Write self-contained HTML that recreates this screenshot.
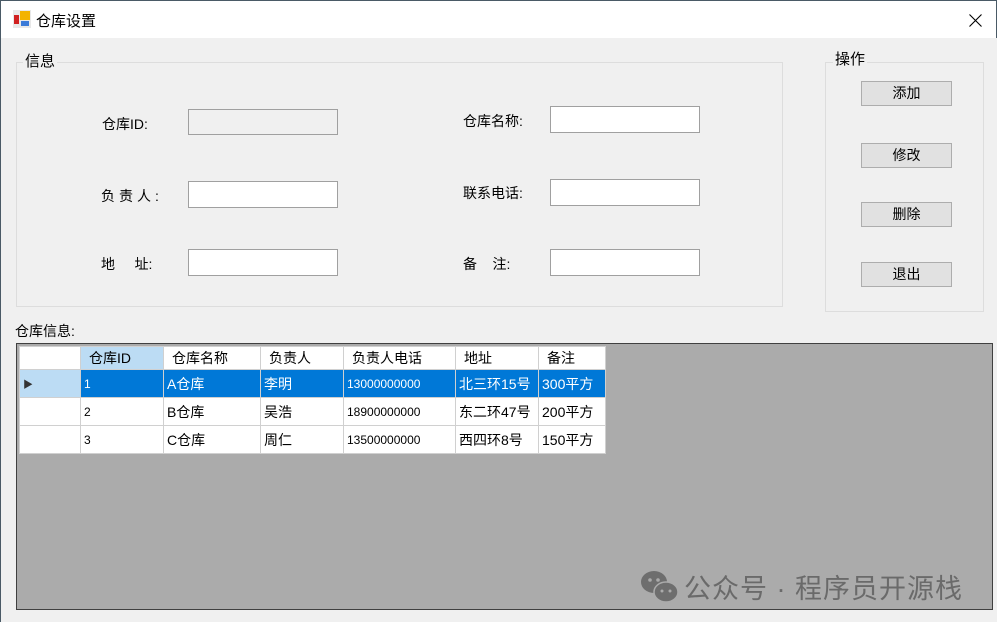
<!DOCTYPE html>
<html><head><meta charset="utf-8"><style>
*{margin:0;padding:0;box-sizing:border-box}
body{width:997px;height:622px;background:#f0f0f0;position:relative;overflow:hidden;font-family:"Liberation Sans","Noto Sans CJK SC",sans-serif;font-size:14px;color:#000}
.a{position:absolute}
.title{left:0;top:0;width:997px;height:38px;background:#fff;border-top:1px solid #4a5a66;border-left:1px solid #4a5a66;border-right:1px solid #4a5a66}
.grp{border:1px solid #dddddd}
.gt{background:#f0f0f0;padding:0 2px;font-size:15px;line-height:17px}
.in{border:1px solid #a0a0a0;background:#fff;height:27px;width:150px}
.lb{font-size:14px;line-height:16px}
.btn{left:861px;width:91px;height:25px;border:1px solid #adadad;background:#e1e1e1;text-align:center;line-height:23px;font-size:14px}
.grid{left:16px;top:343px;width:977px;height:267px;background:#ababab;border:1px solid #404040}
table{position:absolute;left:2px;top:2px;border-collapse:collapse;font-size:14px}
td{border:1px solid #d0d0d0;height:28px;padding:0 3px;background:#fff;white-space:nowrap}
tr.h td{height:23px;padding-left:8px}
tr.s td{background:#0078d7;color:#fff}
.n{font-size:12px}
</style></head><body>
<div class="a" style="left:0;top:0;width:1px;height:622px;background:#4a5a66"></div>
<div class="a title">
 <svg class="a" style="left:12px;top:9px" width="18" height="18"><rect x="0" y="0" width="18" height="18" fill="#e8e8e8"/><rect x="7" y="1" width="10" height="9" fill="#f3b300"/><rect x="1" y="5" width="5" height="9" fill="#d02020"/><rect x="8" y="11" width="8" height="5" fill="#3a7ad8"/></svg>
 <div class="a" style="left:35px;top:9px;font-size:15px">仓库设置</div>
 <svg class="a" style="left:968px;top:13px" width="13" height="13"><path d="M0.5 0.5L12.5 12.5M12.5 0.5L0.5 12.5" stroke="#000" stroke-width="1.1"/></svg>
</div>
<div class="a grp" style="left:16px;top:62px;width:767px;height:245px"></div>
<div class="a gt" style="left:23px;top:53px">信息</div>
<div class="a grp" style="left:825px;top:62px;width:159px;height:250px"></div>
<div class="a gt" style="left:833px;top:51px">操作</div>

<div class="a lb" style="left:102px;top:116px">仓库ID:</div>
<div class="a in" style="left:188px;top:109px;background:#f0f0f0;height:26px"></div>
<div class="a lb" style="left:101px;top:188px;letter-spacing:4px">负责人:</div>
<div class="a in" style="left:188px;top:181px"></div>
<div class="a lb" style="left:101px;top:256px">地&nbsp;&nbsp;&nbsp;&nbsp;&nbsp;址:</div>
<div class="a in" style="left:188px;top:249px"></div>

<div class="a lb" style="left:463px;top:113px">仓库名称:</div>
<div class="a in" style="left:550px;top:106px;height:27px"></div>
<div class="a lb" style="left:463px;top:185px">联系电话:</div>
<div class="a in" style="left:550px;top:179px"></div>
<div class="a lb" style="left:463px;top:256px">备&nbsp;&nbsp;&nbsp;&nbsp;注:</div>
<div class="a in" style="left:550px;top:249px"></div>

<div class="a btn" style="top:81px">添加</div>
<div class="a btn" style="top:143px">修改</div>
<div class="a btn" style="top:202px">删除</div>
<div class="a btn" style="top:262px">退出</div>

<div class="a lb" style="left:15px;top:323px">仓库信息:</div>
<div class="a grid">
<table>
<tr class="h"><td style="width:61px"></td><td style="width:83px;background:#bcdcf4">仓库ID</td><td style="width:97px">仓库名称</td><td style="width:83px">负责人</td><td style="width:112px">负责人电话</td><td style="width:83px">地址</td><td style="width:67px">备注</td></tr>
<tr class="s"><td style="background:#bcdcf4;color:#333;font-size:10px">▶</td><td class="n">1</td><td>A仓库</td><td>李明</td><td class="n">13000000000</td><td>北三环15号</td><td>300平方</td></tr>
<tr><td></td><td class="n">2</td><td>B仓库</td><td>吴浩</td><td class="n">18900000000</td><td>东二环47号</td><td>200平方</td></tr>
<tr><td></td><td class="n">3</td><td>C仓库</td><td>周仁</td><td class="n">13500000000</td><td>西四环8号</td><td>150平方</td></tr>
</table>
<svg class="a" style="left:623px;top:225px" width="40" height="36"><ellipse cx="14" cy="13" rx="13" ry="11" fill="#6e6e6e"/><ellipse cx="26" cy="23" rx="12" ry="10" fill="#6e6e6e" stroke="#ababab" stroke-width="1.5"/><circle cx="10" cy="11" r="1.8" fill="#ababab"/><circle cx="18" cy="11" r="1.8" fill="#ababab"/><circle cx="22" cy="22" r="1.5" fill="#ababab"/><circle cx="30" cy="22" r="1.5" fill="#ababab"/></svg>
<div class="a" style="left:667px;top:223px;font-size:27px;color:#6a6a6a;letter-spacing:1px">公众号 · 程序员开源栈</div>
</div>
</body></html>
